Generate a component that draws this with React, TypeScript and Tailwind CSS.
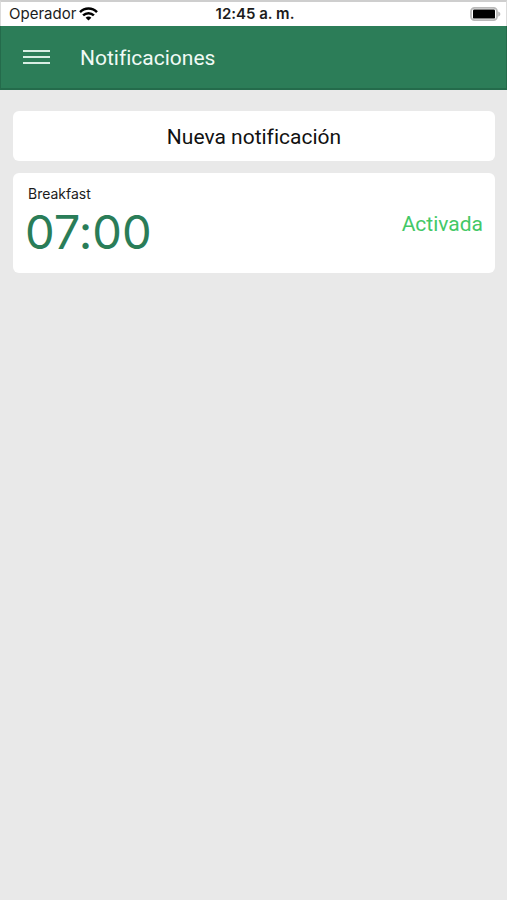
import React, { useState } from 'react';

type Reminder = {
  id: number;
  name: string;
  time: string;
};

const reminders: Reminder[] = [{ id: 1, name: 'Breakfast', time: '07:00' }];

const WifiIcon = () => (
  <svg width="19" height="14" viewBox="0 0 19 14" aria-hidden="true">
    <g fill="none" stroke="#000" strokeWidth="2.5">
      <path d="M1 5.2C5.8 0.4 13.2 0.4 18 5.2" />
      <path d="M4.1 8.4C7.2 5.4 11.8 5.4 14.9 8.4" />
    </g>
    <path d="M9.5 13.6L6.6 10.7C8.2 9.1 10.8 9.1 12.4 10.7Z" fill="#000" />
  </svg>
);

const BatteryIcon = () => (
  <svg width="31" height="14" viewBox="0 0 31 14" aria-hidden="true">
    <rect x="1" y="0.9" width="26" height="12.2" rx="3.5" fill="#fff" stroke="#b9b9b9" strokeWidth="1.8" />
    <rect x="3" y="2.4" width="22" height="9.2" rx="1.2" fill="#000" />
    <path d="M28.2 4.4C31 5.4 31 8.6 28.2 9.6Z" fill="#b9b9b9" />
  </svg>
);

const StatusBar: React.FC = () => (
  <div className="grid h-[26px] grid-cols-3 items-center border-x border-t-2 border-x-[#dcdcdc] border-t-[#cecece] bg-white pl-2 pr-[5px] text-[15px] leading-5 text-[#1c1c1c]">
    <div className="flex items-center gap-[3px]">
      <span>Operador</span>
      <WifiIcon />
    </div>
    <span className="text-center font-semibold">12:45 a. m.</span>
    <div className="flex justify-end">
      <BatteryIcon />
    </div>
  </div>
);

const ReminderCard: React.FC<{ reminder: Reminder }> = ({ reminder }) => {
  const [active, setActive] = useState(true);

  return (
    <article className="flex h-[100px] items-center justify-between rounded-md bg-white px-3">
      <div className="pt-[2px]">
        <h2 className="pl-[3px] text-sm leading-4 text-[#1c1c1c]">{reminder.name}</h2>
        <time className="block text-[47px] leading-[60px] text-[#2a7d58]">{reminder.time}</time>
      </div>
      <button
        type="button"
        aria-pressed={active}
        onClick={() => setActive(!active)}
        className={`pt-[3px] font-['Roboto',sans-serif] text-[21px] ${active ? 'text-[#43c866]' : 'text-gray-500'}`}
      >
        {active ? 'Activada' : 'Desactivada'}
      </button>
    </article>
  );
};

const App: React.FC = () => {
  return (
    <div className="min-h-screen bg-[#e9e9e9] font-['Inter',sans-serif] [font-variant-ligatures:none]">
      <StatusBar />

      {/* Header */}
      <header className="flex h-16 items-center border-x border-b-2 border-[#246b4b] bg-[#2c7d58] pl-[22px] text-white">
        <button type="button" aria-label="Menú" className="flex w-[27px] flex-col gap-1">
          <span className="h-[2px] w-full bg-[#d8eee3]" />
          <span className="h-[2px] w-full bg-[#d8eee3]" />
          <span className="h-[2px] w-full bg-[#d8eee3]" />
        </button>
        <h1 className="ml-[30px] pt-[3px] font-['Roboto',sans-serif] text-[21px] text-[#f0faf5]">Notificaciones</h1>
      </header>

      <main className="flex flex-col gap-3 pl-[13px] pr-3 pt-[21px]">
        <button type="button" className="h-[50px] rounded-md bg-white pt-[3px] font-['Roboto',sans-serif] text-[21px] text-[#111]">
          Nueva notificación
        </button>
        {reminders.map((r) => (
          <ReminderCard key={r.id} reminder={r} />
        ))}
      </main>
    </div>
  );
};

export default App;
